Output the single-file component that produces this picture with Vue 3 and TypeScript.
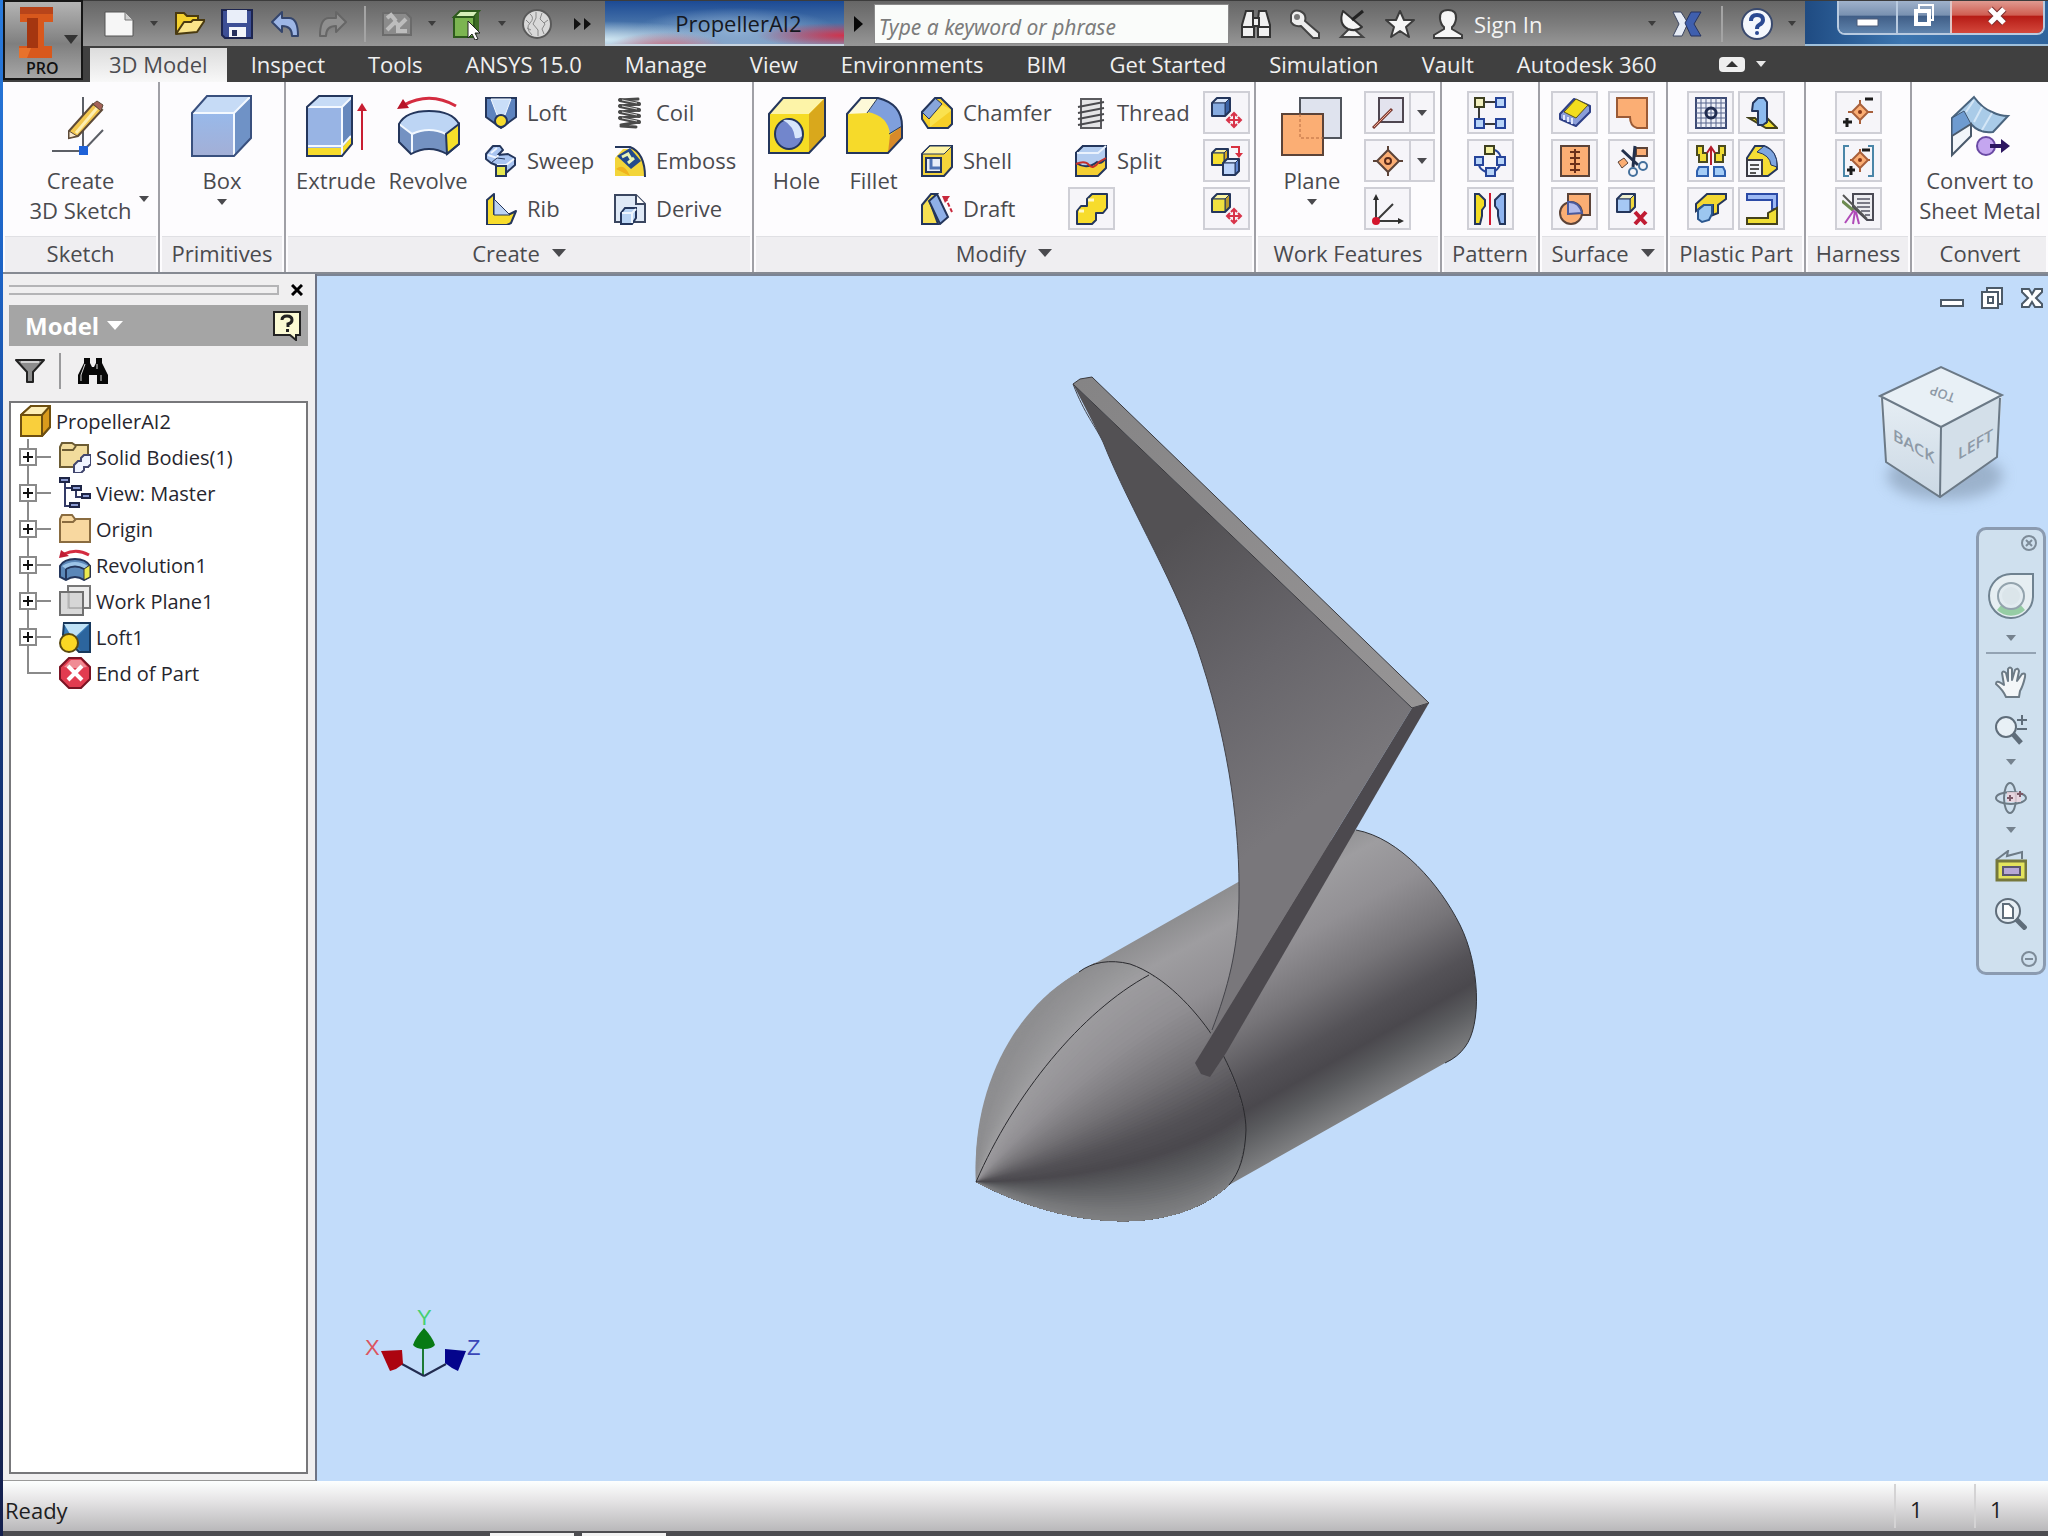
<script setup lang="ts">
interface Tool {
  icon: string
  label: string
  lines?: string[]
  caret?: 'below' | 'beside'
  boxed?: boolean
  split?: boolean
}

interface Panel {
  key: string
  title: string
  menu?: boolean
  big: Tool[]
  columns: Tool[][]
}

const t = (icon: string, label: string): Tool => ({ icon, label })
const b = (icon: string, label: string, split = false): Tool => ({ icon, label, boxed: true, split })

const tabs = ['3D Model', 'Inspect', 'Tools', 'ANSYS 15.0', 'Manage', 'View', 'Environments', 'BIM', 'Get Started', 'Simulation', 'Vault', 'Autodesk 360']

const panels: Panel[] = [
  { key: 'sketch', title: 'Sketch', big: [{ icon: 'sketch3d', label: 'Create 3D Sketch', lines: ['Create', '3D Sketch'], caret: 'beside' }], columns: [] },
  { key: 'primitives', title: 'Primitives', big: [{ icon: 'box', label: 'Box', lines: ['Box'], caret: 'below' }], columns: [] },
  {
    key: 'create', title: 'Create', menu: true,
    big: [{ icon: 'extrude', label: 'Extrude', lines: ['Extrude'] }, { icon: 'revolve', label: 'Revolve', lines: ['Revolve'] }],
    columns: [[t('loft', 'Loft'), t('sweep', 'Sweep'), t('rib', 'Rib')], [t('coil', 'Coil'), t('emboss', 'Emboss'), t('derive', 'Derive')]],
  },
  {
    key: 'modify', title: 'Modify', menu: true,
    big: [{ icon: 'hole', label: 'Hole', lines: ['Hole'] }, { icon: 'fillet', label: 'Fillet', lines: ['Fillet'] }],
    columns: [
      [t('chamfer', 'Chamfer'), t('shell', 'Shell'), t('draft', 'Draft')],
      [t('thread', 'Thread'), t('split', 'Split'), b('combine', 'Combine')],
      [b('moveFace', 'Move Face'), b('copyObject', 'Copy Object'), b('moveBodies', 'Move Bodies')],
    ],
  },
  {
    key: 'work', title: 'Work Features',
    big: [{ icon: 'plane', label: 'Plane', lines: ['Plane'], caret: 'below' }],
    columns: [[b('axis', 'Axis', true), b('point', 'Point', true), b('ucs', 'UCS')]],
  },
  { key: 'pattern', title: 'Pattern', big: [], columns: [[b('rectPattern', 'Rectangular'), b('circPattern', 'Circular'), b('mirror', 'Mirror')]] },
  {
    key: 'surface', title: 'Surface', menu: true, big: [],
    columns: [[b('thicken', 'Thicken'), b('stitch', 'Stitch'), b('sculpt', 'Sculpt')], [b('patch', 'Patch'), b('trim', 'Trim'), b('deleteFace', 'Delete Face')]],
  },
  {
    key: 'plastic', title: 'Plastic Part', big: [],
    columns: [[b('grill', 'Grill'), b('snapFit', 'Snap Fit'), b('lip', 'Lip')], [b('boss', 'Boss'), b('ruleFillet', 'Rule Fillet'), b('rest', 'Rest')]],
  },
  { key: 'harness', title: 'Harness', big: [], columns: [[b('pin', 'Place Pin'), b('pinGroup', 'Place Pin Group'), b('harnessProps', 'Harness Properties')]] },
  { key: 'convert', title: 'Convert', big: [{ icon: 'sheetMetal', label: 'Convert to Sheet Metal', lines: ['Convert to', 'Sheet Metal'] }], columns: [] },
]

const nodes = [
  { icon: 'solidBodies', label: 'Solid Bodies(1)', leaf: false },
  { icon: 'viewRep', label: 'View: Master', leaf: false },
  { icon: 'folder', label: 'Origin', leaf: false },
  { icon: 'revolution', label: 'Revolution1', leaf: false },
  { icon: 'workPlane', label: 'Work Plane1', leaf: false },
  { icon: 'loftNode', label: 'Loft1', leaf: false },
  { icon: 'endOfPart', label: 'End of Part', leaf: true },
]

const N = '#24365c'
const Y = '#f7dc2c'
const B = '#a9c5f2'
const O = '#fbae74'
const OB = '#5c4338'
const cross = (x: number, y: number) =>
  `<path d="M${x - 6} ${y}H${x + 6}M${x} ${y - 6}V${y + 6}M${x - 3} ${y - 4}L${x} ${y - 7}L${x + 3} ${y - 4}M${x - 3} ${y + 4}L${x} ${y + 7}L${x + 3} ${y + 4}M${x - 4} ${y - 3}L${x - 7} ${y}L${x - 4} ${y + 3}M${x + 4} ${y - 3}L${x + 7} ${y}L${x + 4} ${y + 3}" fill="none" stroke="#d8344a" stroke-width="2"/>`
const cube = (x: number, y: number, s: number, front: string, top: string, side: string) => {
  const d = Math.round(s * 0.35)
  return `<g stroke="${N}" stroke-width="1" stroke-linejoin="round"><path d="M${x} ${y + d}L${x + d} ${y}H${x + s + d}L${x + s} ${y + d}Z" fill="${top}"/><path d="M${x + s} ${y + d}L${x + s + d} ${y}V${y + s}L${x + s} ${y + s + d}Z" fill="${side}"/><path d="M${x} ${y + d}H${x + s}V${y + s + d}H${x}Z" fill="${front}"/><path d="M${x} ${y + d}L${x + d} ${y}H${x + s + d}V${y + s}L${x + s} ${y + s + d}H${x}Z" fill="none" stroke-width="2"/></g>`
}

const icons: Record<string, string> = {
  // Quick access bar
  newDoc: '<path d="M2 4H22L30 12V28H2Z" fill="#f6f6f6" stroke="#555" stroke-width="1"/><path d="M22 4V12H30Z" fill="#d0d0d0" stroke="#777"/>',
  open: '<path d="M3 26V5H11L14 8H25V13" fill="#f5d22e" stroke="#4a3a10" stroke-width="2"/><path d="M3 26L11 14H18L20 12H32L24 24Z" fill="#fbe58a" stroke="#4a3a10" stroke-width="2" stroke-linejoin="round"/>',
  save: `<path d="M1 2H31V30H4L1 27Z" fill="#3d4f96" stroke="#1d2550" stroke-width="2"/><path d="M6 2H26V15H6Z" fill="#e9eef9"/><path d="M8 19H25V29H8Z" fill="#f3f5fb"/><path d="M11 22H16V28H11Z" fill="#26305e"/>`,
  undo: '<path d="M3 14L13 4V10H20Q29 10 29 28H23Q23 18 13 18V24Z" fill="#9db6e6" stroke="#34456c" stroke-width="2" stroke-linejoin="round"/>',
  redo: '<path d="M29 14L19 4V10H12Q3 10 3 28H9Q9 18 19 18V24Z" fill="#8f8f8f" stroke="#666" stroke-width="2" stroke-linejoin="round"/>',
  update: '<path d="M2 5H25L30 10V27H2Z" fill="#8b8b8b" stroke="#6b6b6b" stroke-width="2"/><path d="M6 10L10 7L15 13M26 23H17V15M6 22L14 14L18 18L25 11" stroke="#bdbdbd" stroke-width="4" fill="none"/>',
  select: '<path d="M3 9L9 3H28L23 9Z" fill="#d6efb8" stroke="#2d5a1c" stroke-width="2"/><path d="M23 9L28 3V24L23 29Z" fill="#3d6b26"/><path d="M3 9H23V29H3Z" fill="#7cb551" stroke="#2d5a1c" stroke-width="2"/><path d="M17 13V30L21 26L24 32L27 31L24 25H29Z" fill="#fff" stroke="#222" stroke-width="1"/>',
  appearance: '<circle cx="16" cy="16" r="14" fill="#d9d9d9" stroke="#5a5a5a" stroke-width="2"/><path d="M9 6Q14 10 9 15T11 27M15 4V10L12 16L17 22V28M21 5L19 11L24 16L21 21L23 26M5 12L9 16M27 12L23 15M6 20L10 22" fill="none" stroke="#888" stroke-width="1"/>',
  more: '<path d="M7 10L14 16L7 22ZM17 10L24 16L17 22Z" fill="#111"/>',
  binocLight: '<g fill="#f0f0f0" stroke="#333" stroke-width="2"><path d="M6 3H13V9L14 12V29H2V17Z"/><path d="M19 3H26L30 17V29H18V12Z"/><path d="M13 10H19V18H13Z"/></g><path d="M2 19H14M18 19H30" stroke="#333" stroke-width="2"/>',
  key: '<path d="M3 7Q5 1 12 3Q19 6 17 13L31 25V30H25L13 18Q6 19 3 14Z" fill="#efefef" stroke="#444" stroke-width="2"/><circle cx="9" cy="9" r="3" fill="#777"/>',
  dish: '<path d="M14 20L5 29H27L18 21Z" fill="#f2f2f2" stroke="#444" stroke-width="2"/><path d="M7 3Q2 16 12 21Q20 24 26 19Z" fill="#f6f6f6" stroke="#333" stroke-width="2" stroke-linejoin="round"/><path d="M16 12L27 3" stroke="#222" stroke-width="3"/>',
  star: '<path d="M16 3L20 12H30L22 19L25 29L16 23L7 29L10 19L2 12H12Z" fill="#f6f6f6" stroke="#3c3c3c" stroke-width="2" stroke-linejoin="round"/>',
  person: '<path d="M16 2Q25 2 24 11Q23 17 20 19V21L30 27V30H2V27L12 21V19Q9 17 8 11Q7 2 16 2Z" fill="#f6f6f6" stroke="#3c3c3c" stroke-width="2"/>',
  exchange: '<path d="M2 4H10L17 15L11 28H2L8 16Z" fill="#e6ecf6" stroke="#3a4460" stroke-width="1"/><path d="M30 4H20L14 15L20 28H30L23 16Z" fill="#3f5fae" stroke="#26335e" stroke-width="1"/>',
  help: '<circle cx="16" cy="16" r="15" fill="#f4f7fc" stroke="#3a4a6e" stroke-width="2"/><path d="M10 13Q10 7 16 7Q22 7 22 12Q22 15 18 17Q16 18 16 21" fill="none" stroke="#2b4a92" stroke-width="4"/><circle cx="16" cy="25" r="2" fill="#2b4a92"/>',

  // Large ribbon icons
  sketch3d: `<path d="M34 3V56M3 57H34L54 36" fill="none" stroke="#5c5f66" stroke-width="2"/><path d="M30 52H39V61H30Z" fill="#1f62d8"/><path d="M20 37L44 10L53 16L29 42L20 44Z" fill="#f3c74e" stroke="#5d4a38" stroke-width="2"/><path d="M27 39L48 14" stroke="#fdeeb0" stroke-width="3"/><path d="M44 10L48 7L54 11L52 17Z" fill="#a46258" stroke="#5d4a38"/><path d="M20 37L28 42L20 44Z" fill="#fbe9cc" stroke="#5d4a38"/>`,
  box: `<defs><linearGradient id="boxFace" x1="0" y1="0" x2="0" y2="1"><stop offset="0" stop-color="#94bdf2"/><stop offset="1" stop-color="#a3afd6"/></linearGradient></defs><path d="M2 19L17 2H61V44L44 62H2Z" fill="url(#boxFace)"/><path d="M2 19L17 2H61L44 19Z" fill="#c6dbf6"/><path d="M44 19L61 2V44L44 62Z" fill="#6f92c6"/><path d="M3 19H44V61M44 19L60 3" fill="none" stroke="#f4f9ff" stroke-width="2"/><path d="M2 19L17 2H61V44L44 62H2Z" fill="none" stroke="#39507e" stroke-width="2"/>`,
  extrude: `<path d="M3 13L15 2H48V50L38 62H3Z" fill="#98b4e4"/><path d="M3 13L15 2H48L38 13Z" fill="#c6dbf6"/><path d="M38 13L48 2V50L38 62Z" fill="#6688bd"/><path d="M3 54H38L48 42V50L38 62H3Z" fill="${Y}"/><path d="M4 52H38L47 42M4 13H38V61M38 13L48 3" fill="none" stroke="#f4f9ff" stroke-width="2"/><path d="M3 13L15 2H48V50L38 62H3Z" fill="none" stroke="${N}" stroke-width="2"/><path d="M58 56V14" stroke="#c81e32" stroke-width="2"/><path d="M53 17L58 9L63 17Z" fill="#c81e32"/>`,
  revolve: `<path d="M3 30Q10 17 33 17Q56 17 63 30V50L51 60Q33 50 15 60L3 48Z" fill="#7492c2"/><path d="M3 30Q10 17 33 17Q56 17 63 30L50 40Q33 32 16 40Z" fill="#bdd5f4"/><path d="M50 40L63 30V50L51 60Z" fill="#f6e02a"/><path d="M3 30L16 40V59M16 40Q33 32 50 40" fill="none" stroke="#f2f8ff" stroke-width="2"/><path d="M50 40L63 30V50L51 60Z" fill="none" stroke="${N}" stroke-width="2"/><path d="M3 30Q10 17 33 17Q56 17 63 30V50L51 60Q33 50 15 60L3 48Z" fill="none" stroke="${N}" stroke-width="2"/><path d="M8 11Q34 -3 60 12" fill="none" stroke="#d42c40" stroke-width="3"/><path d="M1 15L7 5L13 14Z" fill="#b81428"/>`,
  hole: `<path d="M4 20L18 4H60V42L44 59H4Z" fill="#f6dc24"/><path d="M4 20L18 4H60L44 20Z" fill="#fdf4a8"/><path d="M44 20L60 4V42L44 59Z" fill="#d9a81c"/><path d="M4 20L18 4H60V42L44 59H4Z" fill="none" stroke="${N}" stroke-width="2"/><ellipse cx="24" cy="40" rx="14" ry="15" fill="#7286cc" stroke="${N}" stroke-width="2"/><path d="M18 26Q36 24 37 42Q34 45 30 44Q29 32 18 26Z" fill="#d8e6fb"/>`,
  fillet: `<path d="M5 20L19 4H36Q60 10 60 32V44L46 59H5Z" fill="#f6da2a"/><path d="M5 20L19 4H36L26 19Z" fill="#fdf9d8"/><path d="M26 18L36 4Q60 10 60 32L48 40Q46 22 26 18Z" fill="#7f9fdc"/><path d="M48 41L60 32V44L46 59Z" fill="#d88a2a"/><path d="M25 19L35 5M47 40L60 32" stroke="${N}" stroke-width="1"/><path d="M5 20L19 4H36Q60 10 60 32V44L46 59H5Z" fill="none" stroke="${N}" stroke-width="2"/>`,
  plane: `<path d="M20 4H61V44H20Z" fill="#dfe3ee" stroke="#50545c" stroke-width="2"/><path d="M2 20H43V61H2Z" fill="${O}" stroke="${OB}" stroke-width="2"/><path d="M20 20V44H43" fill="none" stroke="#b86c40" stroke-width="1" stroke-dasharray="3 2"/>`,
  sheetMetal: `<path d="M4 24L26 3Q34 14 44 18Q52 22 60 22L45 38Q32 40 23 30L4 44Z" fill="#a9cbe8" stroke="#4a647e" stroke-width="2"/><path d="M4 24L16 17L23 30L4 42Z" fill="#6e9bd0" stroke="#3f5672"/><path d="M4 42L23 30V42L4 61Z" fill="#f2f6fa" stroke="#4a5a6c" stroke-width="2"/><path d="M26 6L18 18M34 13L26 28M44 19L34 36" stroke="#d4e6f6" stroke-width="2"/><circle cx="38" cy="52" r="9" fill="#c4a6f0" stroke="#6a4aa4" stroke-width="2"/><path d="M42 52H56" stroke="#2c1660" stroke-width="4"/><path d="M53 45L62 52L53 59Z" fill="#2c1660"/>`,

  // Small ribbon icons
  loft: `<path d="M1 1H31V20L16 31L1 20Z" fill="#5d83be" stroke="${N}" stroke-width="2"/><path d="M6 2H26L20 18H12Z" fill="#c9def8" stroke="#f2f8ff"/><circle cx="16" cy="24" r="6" fill="${Y}" stroke="${N}" stroke-width="2"/>`,
  sweep: `<path d="M1 9L8 1H15L18 5L13 10L23 9L30 13V20L21 28H11V20L6 18L1 14Z" fill="${B}" stroke="${N}" stroke-width="2" stroke-linejoin="round"/><path d="M3 10L12 13L13 10M12 20L21 20L29 14M6 8L12 3" stroke="#eef5ff" stroke-width="2" fill="none"/><path d="M6 18L12 13L20 14" stroke="${N}" stroke-width="1" fill="none"/><path d="M11 21H21V31H11Z" fill="#e6e84e" stroke="${N}" stroke-width="2"/>`,
  rib: `<path d="M2 7L9 1V21H25L31 18L26 30L22 32H2Z" fill="${Y}" stroke="${N}" stroke-width="2" stroke-linejoin="round"/><path d="M9 6L25 22H9Z" fill="#bcd3f4" stroke="${N}" stroke-width="1"/>`,
  coil: '<g fill="none" stroke="#4a4a4a" stroke-width="4" stroke-linecap="round"><path d="M6 3L25 7M6 9L25 13M6 15L25 19M6 21L25 25"/></g><g fill="none" stroke="#4a4a4a" stroke-width="3" stroke-linecap="round"><path d="M25 7L6 9M25 13L6 15M25 19L6 21M25 25L7 28M6 3L24 2M7 29L22 30"/></g><path d="M8 3L23 6M8 9L23 12M8 15L23 18M8 21L23 24" stroke="#d4d4d4" stroke-width="1"/>',
  emboss: `<path d="M1 13L9 4H20Q31 12 31 31H1Z" fill="#f3d53a"/><path d="M1 2H16Q31 8 31 32" fill="none" stroke="${N}" stroke-width="2"/><path d="M3 11L16 3L27 16L17 24Z" fill="#234a8c"/><path d="M8 12L14 9L17 14M14 18L20 13" stroke="#e8f4b8" stroke-width="3" fill="none"/><path d="M2 24Q10 17 16 31" fill="#f0b41e"/>`,
  derive: `<path d="M1 2H22L31 11V29H1Z" fill="#dfe9f6" stroke="#3a4660" stroke-width="2"/><path d="M22 2V11H31" fill="#fff" stroke="#3a4660" stroke-width="2"/><path d="M7 20L11 15H22V25L18 31H7Z" fill="#b9d4f4" stroke="${N}" stroke-width="2"/><path d="M8 20H18V30M18 20L22 16" stroke="#eef6ff" fill="none" stroke-width="2"/>`,
  chamfer: `<path d="M1 15L14 1H20L31 12V27L27 31H7L1 22Z" fill="#f6cf28"/><path d="M1 15L14 1L21 7L8 22Z" fill="#88a6da" stroke="${N}" stroke-width="1"/><path d="M21 8L31 13L9 30V22Z" fill="#fae24e"/><path d="M1 15L14 1H20L31 12V27L27 31H7L1 22Z" fill="none" stroke="${N}" stroke-width="2"/>`,
  shell: `<path d="M1 9L9 1H31V22L23 31H1Z" fill="#f3d33a" stroke="${N}" stroke-width="2"/><path d="M1 9L9 1H31L23 9Z" fill="#fdf3a4" stroke="${N}"/><path d="M5 13H20V27H5Z" fill="#e8eef8" stroke="${N}" stroke-width="2"/><path d="M10 14V23H19" fill="none" stroke="#4f74b4" stroke-width="3"/>`,
  draft: `<path d="M1 12L10 1H16L9 9L17 31H1Z" fill="#f6df52" stroke="${N}" stroke-width="2"/><path d="M8 8L16 1L27 24L19 31Z" fill="#8fb0e8" stroke="${N}" stroke-width="2"/><path d="M31 19L25 6" stroke="#c8283c" stroke-width="2" stroke-dasharray="4 2"/><path d="M21 3L29 3L24 10Z" fill="#c8283c"/>`,
  thread: '<path d="M6 2H26V31H6Z" fill="#e4e4e6" stroke="#5a5a5e" stroke-width="2"/><path d="M3 10L29 5M3 16L29 11M3 22L29 17M3 28L29 23" stroke="#4a4a4e" stroke-width="2"/>',
  split: `<path d="M1 8L8 1H31V23L23 31H1Z" fill="#f4cf34" stroke="${N}" stroke-width="2"/><path d="M1 8L8 1H31V13Q26 20 22 17Q12 25 1 18Z" fill="#b4cdf0" stroke="${N}" stroke-width="2"/><path d="M2 8H23L31 1" fill="none" stroke="#eaf2fd" stroke-width="2"/><path d="M1 19Q10 15 14 20T24 17L31 13" fill="none" stroke="#c4302c" stroke-width="2"/>`,
  combine: `<path d="M1 18L5 13H11V6L16 1H31V15L27 20H20V27L16 31H1Z" fill="${Y}" stroke="${N}" stroke-width="2" stroke-linejoin="round"/><path d="M3 18H8M12 7H18" stroke="#fff8c4" stroke-width="3"/>`,
  moveFace: cube(1, 1, 13, '#86abe0', '#dbe8fa', '#3a62a4') + cross(23, 23),
  copyObject: cube(1, 4, 12, '#f6df30', '#fbf09a', '#d8a820') + cube(12, 14, 12, '#bcd4fa', '#dceafd', '#5f86d0') + '<path d="M20 2H28V9" stroke="#d83040" stroke-width="2" fill="none"/><path d="M24 8L28 13L32 8Z" fill="#d83040"/>',
  moveBodies: cube(1, 1, 13, '#f0e040', '#fbf4a0', '#b8982a') + cross(23, 23),
  axis: '<path d="M7 1H31V25H7Z" fill="#e3e3ee" stroke="#4e4650" stroke-width="2"/><path d="M1 31L20 12" stroke="#7a3c34" stroke-width="3"/><path d="M2 30L19 13" stroke="#f4a890" stroke-width="1"/>',
  point: `<path d="M16 1V31M1 16H31" stroke="${OB}" stroke-width="2"/><path d="M16 5L27 16L16 27L5 16Z" fill="${O}" stroke="${OB}" stroke-width="2"/><circle cx="16" cy="16" r="3" fill="${O}" stroke="#5a2a1a" stroke-width="2"/>`,
  ucs: '<path d="M4 28V5M4 28H28M4 28L21 11" stroke="#3a3a3a" stroke-width="2" fill="none"/><path d="M1 7L4 1L7 7ZM26 25L32 28L26 31Z" fill="#2c2c2c"/><circle cx="4" cy="28" r="4" fill="#d4142c"/>',
  rectPattern: '<path d="M5 5H27M5 5V27H27" fill="none" stroke="#3a3a3a" stroke-width="2"/><path d="M1 1H10V10H1Z" fill="#f3f0c0" stroke="#3e4020" stroke-width="2"/><g fill="#b8d4f8" stroke="#26449a" stroke-width="2"><path d="M22 1H31V10H22Z"/><path d="M1 22H10V31H1Z"/><path d="M22 22H31V31H22Z"/></g>',
  circPattern: '<path d="M21 5Q27 8 27 15T20 27M12 27Q5 24 5 19" fill="none" stroke="#26449a" stroke-width="2"/><path d="M11 1H20V9H11Z" fill="#f3f0a0" stroke="#3e4020" stroke-width="2"/><g fill="#b8d4f8" stroke="#26449a" stroke-width="2"><path d="M1 12H9V20H1Z"/><path d="M23 12H31V20H23Z"/><path d="M12 23H21V31H12Z"/></g>',
  mirror: `<path d="M1 1H5L11 7V13L8 17V23L6 31H1Z" fill="#f2dc24" stroke="${N}" stroke-width="2"/><path d="M31 1H27L21 7V13L24 17V23L26 31H31Z" fill="#8fb4f0" stroke="${N}" stroke-width="2"/><path d="M16 0V32" stroke="#d01830" stroke-width="2"/>`,
  thicken: `<path d="M1 17L15 2L31 9V15L17 29L1 22Z" fill="#8b9ed8" stroke="#2e3f86" stroke-width="2" stroke-linejoin="round"/><path d="M5 15L17 2L29 8L17 21Z" fill="#f2dd1e" stroke="#5a5318" stroke-width="1"/><path d="M5 18V23M9 20V25M13 21V27" stroke="#e0e6fa" stroke-width="2"/>`,
  stitch: `<path d="M2 1H30V31H2Z" fill="${O}" stroke="${OB}" stroke-width="2"/><path d="M16 4V28M11 7H21M11 13H21M11 19H21M11 25H21" stroke="#6a2f1a" stroke-width="2"/>`,
  sculpt: `<path d="M9 1H31V22H9Z" fill="${O}" stroke="${OB}" stroke-width="2"/><circle cx="12" cy="20" r="11" fill="${O}" stroke="${OB}" stroke-width="2"/><path d="M9 21V9Q20 8 23 20Z" fill="#b4bcec" stroke="#4b5a9c" stroke-width="2"/>`,
  patch: `<path d="M1 1H31V31H21Q14 29 14 20H1Z" fill="${O}" stroke="#9a5a36" stroke-width="2"/>`,
  trim: `<path d="M20 3H31V11H20Z" fill="${O}" stroke="${OB}" stroke-width="2"/><path d="M2 17L8 13L12 18L6 23Z" fill="${O}" stroke="${OB}" stroke-width="1"/><path d="M6 5L22 20M19 1L17 22" stroke="#22304c" stroke-width="3"/><circle cx="17" cy="27" r="4" fill="none" stroke="#44709c" stroke-width="2"/><circle cx="27" cy="21" r="4" fill="none" stroke="#44709c" stroke-width="2"/>`,
  deleteFace: cube(1, 1, 13, '#a6c8f4', '#eef0d0', '#f0d83c') + '<path d="M19 19L30 31M30 19L19 31" stroke="#c01c34" stroke-width="4"/>',
  grill: '<path d="M1 1H31V31H1Z" fill="#eef0f8" stroke="#3c4a74" stroke-width="2"/><path d="M6 1V31M11 1V31M16 1V31M21 1V31M26 1V31M1 6H31M1 11H31M1 16H31M1 21H31M1 26H31" stroke="#56648c" stroke-width="1"/><circle cx="16" cy="16" r="5" fill="none" stroke="#202c50" stroke-width="3"/>',
  snapFit: `<g stroke="#4a4a20" stroke-width="2" fill="#f0dc34"><path d="M2 1H8V8H12V17H4V10H2Z"/><path d="M30 1H24V8H20V17H28V10H30Z"/></g><path d="M16 20V3M12 8L16 2L20 8" stroke="#b41c2c" stroke-width="2" fill="none"/><g fill="#a4ccf6" stroke="#2e5fae" stroke-width="2"><path d="M4 22H13V31H2V26Z"/><path d="M28 22H19V31H30V26Z"/></g>`,
  lip: `<path d="M1 11L12 1H31V6L23 12V20L18 22V12H9L1 18Z" fill="#f3d832" stroke="${N}" stroke-width="2"/><path d="M3 17L9 12H17V21L14 27L7 29L3 26Z" fill="#9cc6f0" stroke="#2a568e" stroke-width="2"/>`,
  boss: `<path d="M3 21H9L14 26H20L22 22L31 31H20Z" fill="#f0de30" stroke="#44421c" stroke-width="2"/><path d="M7 6L12 1H18L21 5V25L17 28H12V14H6Z" fill="#8dbbee" stroke="${N}" stroke-width="2" stroke-linejoin="round"/>`,
  ruleFillet: `<path d="M1 13L9 1H18Q31 6 31 24L22 31H1Z" fill="#f4dc34" stroke="${N}" stroke-width="2"/><path d="M11 7L18 1Q32 6 31 22L25 20Q24 10 11 7Z" fill="#7fa6e0" stroke="${N}"/><path d="M1 15H16V31H1Z" fill="#f4f6fa" stroke="#3a3a44" stroke-width="2"/><path d="M4 20H13M4 24H13M4 28H10" stroke="#555" stroke-width="2"/>`,
  rest: `<path d="M1 1H31V16H26V7H1Z" fill="#9db9f4" stroke="#2b4aa6" stroke-width="2"/><path d="M1 25H22V20L31 15V31H1Z" fill="#f0de34" stroke="#44421c" stroke-width="2"/>`,
  pin: `<path d="M18 3V27M6 15H31" stroke="#a8603c" stroke-width="2"/><path d="M18 7L26 15L18 23L10 15Z" fill="${O}" stroke="#a8603c" stroke-width="2"/><circle cx="18" cy="15" r="2" fill="#8a3818"/><path d="M23 2H31M1 25H10M5 21V30" stroke="#1c1c1c" stroke-width="3"/>`,
  pinGroup: `<path d="M7 1H2V31H7M26 1H31V31H26" fill="none" stroke="#4a86a8" stroke-width="2"/><path d="M18 4V27M8 15H28" stroke="#a8603c" stroke-width="2"/><path d="M18 7L26 15L18 23L10 15Z" fill="${O}" stroke="#a8603c" stroke-width="2"/><circle cx="18" cy="15" r="2" fill="#8a3818"/><path d="M20 5H28M5 25H13M9 21V30" stroke="#1c1c1c" stroke-width="3"/>`,
  harnessProps: '<path d="M11 1H31V27H25L11 14Z" fill="#ececf0" stroke="#4a4a54" stroke-width="2"/><path d="M15 6H28M15 10H28M15 14H28M19 18H28M23 22H28" stroke="#7a7a86" stroke-width="2"/><path d="M1 2L25 26" stroke="#555" stroke-width="2"/><path d="M0 8L12 18" stroke="#6d8a50" stroke-width="3"/><path d="M12 17L3 30M13 18L11 31M14 19L17 31" stroke="#b04ab8" stroke-width="2"/>',

  // Browser tree
  part: '<path d="M2 10L12 1H31V22L23 31H2Z" fill="#f9cf3c" stroke="#5c430c" stroke-width="2"/><path d="M2 10L12 1H31L23 10Z" fill="#fdeeb6"/><path d="M23 10L31 1V22L23 31Z" fill="#d99a1c"/><path d="M2 10L12 1H31V22L23 31H2ZM2 10H23V31M23 10L31 1" fill="none" stroke="#6e4f10" stroke-width="2"/>',
  folder: '<path d="M1 6L3 2H13L16 6H31V29H1Z" fill="#f8d8a0" stroke="#8a6c40" stroke-width="2"/><path d="M3 9H14L17 6" fill="none" stroke="#8a6c40" stroke-width="2"/>',
  solidBodies: '<path d="M1 6L3 2H13L16 4H29V26H1Z" fill="#f2dc9c" stroke="#6c5c34" stroke-width="2"/><path d="M3 9H14L17 5" fill="none" stroke="#6c5c34" stroke-width="2"/><path d="M15 24L19 20H22V17L25 14H32V23L29 26H25V29L22 32H15Z" fill="#f0f4ff" stroke="#41466e" stroke-width="2"/>',
  viewRep: '<path d="M6 5V29H11M6 11H12M17 14V20H23" fill="none" stroke="#333a66" stroke-width="2"/><g fill="#8a9ad0" stroke="#1e2546" stroke-width="2"><path d="M1 1H10V5H1Z"/><path d="M13 9H22V13H13Z"/><path d="M23 17H31V21H23Z"/><path d="M11 26H20V30H11Z"/></g>',
  revolution: `<path d="M1 17Q5 10 16 10T31 17V28L25 31Q16 25 7 31L1 28Z" fill="#5b87b8" stroke="${N}" stroke-width="2"/><path d="M3 17Q16 9 29 17L25 20Q16 15 7 20Z" fill="#9cc4e8"/><path d="M25 20L31 16V28L25 31Z" fill="#ecea50" stroke="#333"/><path d="M7 20Q16 15 25 20M7 20V30" fill="none" stroke="${N}" stroke-width="2"/><path d="M5 5Q18 -1 30 6" stroke="#d42c40" stroke-width="3" fill="none"/><path d="M0 9L2 1L10 7Z" fill="#c01c34"/>`,
  workPlane: '<path d="M9 1H31V23H9Z" fill="#ececec" stroke="#777" stroke-width="2"/><path d="M1 7H24V30H1Z" fill="#d2d2d2" fill-opacity=".85" stroke="#707070" stroke-width="2"/><path d="M10 8V23H23" fill="none" stroke="#a0a0a0"/>',
  loftNode: '<path d="M5 2H31V31H20L4 14Z" fill="#3a7cb8" stroke="#17385c" stroke-width="2"/><path d="M5 3H30L14 18Z" fill="#bfe2f6"/><path d="M30 4L14 20L22 30H30Z" fill="#2c659e"/><circle cx="10" cy="22" r="9" fill="#fbd824" stroke="#5a4a10" stroke-width="2"/>',
  endOfPart: '<path d="M10 1H22L31 10V22L22 31H10L1 22V10Z" fill="#e23c50" stroke="#7a1424" stroke-width="2"/><path d="M5 10L12 3H22L28 10Q16 12 5 10Z" fill="#f08c94"/><path d="M9 9L23 23M23 9L9 23" stroke="#fff" stroke-width="4"/>',
  filter: '<path d="M1 5H29L18 17V27H12V17Z" fill="#8c8c8c" stroke="#222" stroke-width="2" stroke-linejoin="round"/><path d="M6 7H24" stroke="#d0d0d0" stroke-width="2"/>',
  binocDark: '<path d="M7 3H13V8L15 12H17L19 8V3H25V8L31 20V29H20V20H12V29H1V20L7 8Z" fill="#080808"/><path d="M8 9L4 20V26M20 9V14M24 20V26" stroke="#ddd" stroke-width="1" fill="none"/>',

  // Navigation bar
  wheel: '<path d="M24 2H46V25A22 22 0 1 1 24 2Z" fill="#e6eef2" stroke="#6f8290" stroke-width="2"/><path d="M10 38A20 20 0 0 0 38 38L32 31H16Z" fill="#96cda4"/><circle cx="24" cy="24" r="13" fill="#e2ebf0" stroke="#93a3ad" stroke-width="2"/><circle cx="24" cy="24" r="9" fill="#dbe5ea"/>',
  pan: '<path d="M11 31Q8 24 1 18Q1 14 6 17L9 19L7 7Q8 4 11 7L13 15V3Q15 0 17 3V14L20 4Q23 1 24 5L22 15L27 8Q31 6 30 11Q28 20 25 25L24 31Z" fill="#f3f6f8" stroke="#6d7b86" stroke-width="2" stroke-linejoin="round"/>',
  zoom: '<circle cx="11" cy="13" r="10" fill="#e8f0f6" stroke="#5f6d7a" stroke-width="2"/><path d="M18 20L26 29" stroke="#5f6d7a" stroke-width="5"/><path d="M22 6H32M27 1V11M22 15H32" stroke="#5f6d7a" stroke-width="2"/>',
  orbit: '<ellipse cx="16" cy="16" rx="15" ry="6" fill="none" stroke="#6d7b86" stroke-width="2"/><ellipse cx="15" cy="16" rx="6" ry="15" fill="none" stroke="#6d7b86" stroke-width="2"/><path d="M12 10H26V20H12Z" fill="#ecd3dc" fill-opacity=".8"/><path d="M12 16H18M15 13V19M22 12H28M25 9V15" stroke="#7c5a68" stroke-width="2"/>',
  lookAt: '<path d="M1 10L13 1L12 6L27 2V9" fill="none" stroke="#6d7b86" stroke-width="2"/><path d="M2 11H31V30H2Z" fill="#e3e35c" stroke="#76783c" stroke-width="3"/><path d="M8 17H25V25H8Z" fill="#b7a8d6" stroke="#5b5770" stroke-width="2"/>',
  zoomPage: '<circle cx="13" cy="13" r="12" fill="#e6eef4" stroke="#5f6d7a" stroke-width="2"/><path d="M21 21L31 31" stroke="#5f6d7a" stroke-width="5"/><path d="M8 6H14L18 10V20H8Z" fill="#fff" stroke="#5f6d7a" stroke-width="2"/>',
}

// Shading across the hub, from its upper silhouette (0) to its lower one (1).
const shade: [number, number[]][] = [
  [0, [142, 142, 144]],
  [0.12, [158, 157, 160]],
  [0.3, [146, 144, 148]],
  [0.5, [118, 116, 120]],
  [0.68, [84, 82, 87]],
  [0.78, [74, 72, 77]],
  [0.86, [90, 91, 94]],
  [1, [128, 129, 131]],
]
const rgb = (c: number[]) => `rgb(${c.map(Math.round).join(',')})`
function shadeAt(d: number): string {
  for (let i = 1; i < shade.length; i++) {
    const [d1, c1] = shade[i]
    const [d0, c0] = shade[i - 1]
    if (d <= d1) return rgb(c0.map((v, k) => v + ((c1[k] - v) * (d - d0)) / (d1 - d0)))
  }
  return rgb(shade[shade.length - 1][1])
}

// Nose cone: meridians run from the apex to the rim where the cone meets the hub.
type Pt = [number, number]
const apex: Pt = [976, 1182]
const centre: Pt = [1154, 1078]
const rim: Pt[] = [[1079, 972], [1095, 963], [1118, 962], [1140, 968], [1162, 983], [1192, 1010], [1212, 1035], [1225, 1060], [1236, 1087], [1244, 1113], [1246, 1130], [1244, 1146], [1238, 1170], [1229, 1185]]
const depth = (p: Pt) => Math.max(0, ((p[0] - 1101) * 0.492 + (p[1] - 960) * 0.871) / 259)
function meridian(e: Pt): string {
  const d = depth(e)
  const ctl = (a: number, r: number) =>
    [0, 1].map((k) => (apex[k] + a * (centre[k] - apex[k]) + r * (e[k] - centre[k])).toFixed(1)).join(' ')
  return `M${apex.join(' ')}C${ctl(0.23, 0.61 + 0.05 * d)} ${ctl(0.62, 1.01 + 0.12 * d)} ${e.join(' ')}`
}
const slices: { d: string; fill: string }[] = []
for (let i = 0; i < rim.length - 1; i++) {
  for (let s = 0; s < 8; s++) {
    const f = s / 8
    const e: Pt = [rim[i][0] + (rim[i + 1][0] - rim[i][0]) * f, rim[i][1] + (rim[i + 1][1] - rim[i][1]) * f]
    const rest = rim.slice(i + 1).map((p) => 'L' + p.join(' ')).join('')
    slices.push({ d: `${meridian(e)}${rest}C1171 1238 1066 1229 976 1182Z`, fill: shadeAt(depth(e)) })
  }
}
const seam = meridian([1149, 975])
const rimPath = 'M1079 972C1092 962 1110 959 1130 964C1165 976 1195 1010 1212 1035C1228 1062 1246 1100 1246 1130C1245 1155 1240 1172 1229 1185'
</script>

<template>
  <div class="app">
    <header class="head">
      <button class="logo" aria-label="Application menu">
        <svg viewBox="0 0 80 80" width="80" height="80">
          <path d="M17 7H50V22H41V46H49V58H16V46H24V22H17Z" fill="#d8581c" />
          <path d="M17 7H50V14H17Z" fill="#b8441a" />
          <path d="M24 18H35V48H24Z" fill="#a43610" />
          <path d="M16 48H28L24 58H16Z" fill="#e8722c" />
          <path d="M61 35H75L68 44Z" fill="#333" />
        </svg>
        <span class="pro">PRO</span>
      </button>
      <div class="titlebar">
        <div class="quick">
          <button class="cell" aria-label="New"><svg viewBox="0 0 32 32" v-html="icons.newDoc" /></button>
          <button class="drop" aria-label="New options"></button>
          <button class="cell" aria-label="Open"><svg viewBox="0 0 32 32" v-html="icons.open" /></button>
          <button class="cell" aria-label="Save"><svg viewBox="0 0 32 32" v-html="icons.save" /></button>
          <button class="cell" aria-label="Undo"><svg viewBox="0 0 32 32" v-html="icons.undo" /></button>
          <button class="cell" aria-label="Redo"><svg viewBox="0 0 32 32" v-html="icons.redo" /></button>
          <i class="sep"></i>
          <button class="cell" aria-label="Update"><svg viewBox="0 0 32 32" v-html="icons.update" /></button>
          <button class="drop" aria-label="Update options"></button>
          <button class="cell" aria-label="Select"><svg viewBox="0 0 32 32" v-html="icons.select" /></button>
          <button class="drop" aria-label="Select options"></button>
          <button class="cell" aria-label="Appearance"><svg viewBox="0 0 32 32" v-html="icons.appearance" /></button>
          <button class="cell more" aria-label="More commands"><svg viewBox="0 0 32 32" v-html="icons.more" /></button>
        </div>
        <div class="doc-title">PropellerAI2</div>
        <button class="expand" aria-label="Expand search"></button>
        <input class="search" type="text" aria-label="Search" placeholder="Type a keyword or phrase" />
        <div class="info">
          <button class="cell" aria-label="Search help"><svg viewBox="0 0 32 32" v-html="icons.binocLight" /></button>
          <button class="cell" aria-label="Subscription"><svg viewBox="0 0 32 32" v-html="icons.key" /></button>
          <button class="cell" aria-label="Communication"><svg viewBox="0 0 32 32" v-html="icons.dish" /></button>
          <button class="cell" aria-label="Favorites"><svg viewBox="0 0 32 32" v-html="icons.star" /></button>
          <button class="signin"><svg viewBox="0 0 32 32" v-html="icons.person" /><span>Sign In</span></button>
          <button class="drop push" aria-label="Account options"></button>
          <button class="cell" aria-label="Exchange"><svg viewBox="0 0 32 32" v-html="icons.exchange" /></button>
          <i class="sep wide"></i>
          <button class="cell" aria-label="Help"><svg viewBox="0 0 32 32" v-html="icons.help" /></button>
          <button class="drop" aria-label="Help options"></button>
        </div>
        <div class="frame">
          <div class="winbtns">
            <button class="min" aria-label="Minimize"><svg viewBox="0 0 32 32"><path d="M5 18H26V25H5Z" fill="#fff" stroke="#4a5a78" stroke-width="1" /></svg></button>
            <button class="max" aria-label="Restore"><svg viewBox="0 0 32 32"><path d="M11 8V4H25V19H22" fill="none" stroke="#fff" stroke-width="2" /><path d="M8 10H21V23H8Z" fill="none" stroke="#fff" stroke-width="4" /></svg></button>
            <button class="close" aria-label="Close"><svg viewBox="0 0 32 32"><path d="M9 8L23 22M23 8L9 22" stroke="#7c3030" stroke-width="7" /><path d="M9 8L23 22M23 8L9 22" stroke="#fff" stroke-width="5" /></svg></button>
          </div>
        </div>
      </div>
      <nav class="tabs">
        <a v-for="(tab, i) in tabs" :key="tab" href="#" class="tab" :class="{ active: i === 0 }">{{ tab }}</a>
        <button class="collapse" aria-label="Minimize ribbon"></button>
        <button class="collapse-drop" aria-label="Ribbon options"></button>
      </nav>
    </header>

    <section class="ribbon">
      <div v-for="p in panels" :key="p.key" class="panel" :class="p.key">
        <div class="tools">
          <button v-for="tool in p.big" :key="tool.label" class="big">
            <svg viewBox="0 0 64 64" v-html="icons[tool.icon]" />
            <span v-for="line in tool.lines" :key="line">{{ line }}</span>
            <i v-if="tool.caret" class="caret" :class="tool.caret"></i>
          </button>
          <div v-for="(col, c) in p.columns" :key="c" class="col">
            <div v-for="tool in col" :key="tool.label" class="slot">
              <button class="small" :class="{ boxed: tool.boxed }" :aria-label="tool.label">
                <svg viewBox="0 0 32 32" v-html="icons[tool.icon]" />
                <span v-if="!tool.boxed">{{ tool.label }}</span>
              </button>
              <button v-if="tool.split" class="split" :aria-label="tool.label + ' options'"><i class="caret"></i></button>
            </div>
          </div>
        </div>
        <div class="caption">{{ p.title }}<i v-if="p.menu" class="tri"></i></div>
      </div>
    </section>

    <main class="main">
      <aside class="side">
        <div class="grip"><i></i><button aria-label="Close browser"><svg viewBox="0 0 12 12" width="12" height="12"><path d="M1 1L11 11M11 1L1 11" stroke="#000" stroke-width="3" /></svg></button></div>
        <div class="side-head">
          <button class="model">Model<i></i></button>
          <button class="tip" aria-label="Help">
            <svg viewBox="0 0 28 30" width="28" height="30"><path d="M1 1H27V24H23V29L17 24H1Z" fill="#fbfad4" stroke="#222" stroke-width="2" /><path d="M9 9Q9 5 14 5T19 9Q19 12 15 13V16" fill="none" stroke="#222" stroke-width="3" /><path d="M13 18H16V21H13Z" fill="#222" /></svg>
          </button>
        </div>
        <div class="side-tools">
          <button aria-label="Filter"><svg viewBox="0 0 32 32" v-html="icons.filter" /></button>
          <i></i>
          <button aria-label="Find"><svg viewBox="0 0 32 32" v-html="icons.binocDark" /></button>
        </div>
        <ul class="tree">
          <li class="root"><svg class="ico" viewBox="0 0 32 32" v-html="icons.part" />PropellerAI2</li>
          <li v-for="node in nodes" :key="node.label">
            <svg class="branch" viewBox="0 0 40 36">
              <path :d="node.leaf ? 'M9 0V18H32' : 'M9 0V36M9 18H32'" fill="none" stroke="#8a8a8a" stroke-width="2" />
              <template v-if="!node.leaf">
                <path d="M1 10H17V26H1Z" fill="#fff" stroke="#8a8a8a" stroke-width="2" />
                <path d="M4 18H14M9 13V23" stroke="#111" stroke-width="2" />
              </template>
            </svg>
            <svg class="ico" viewBox="0 0 32 32" v-html="icons[node.icon]" />{{ node.label }}
          </li>
        </ul>
      </aside>

      <section class="view">
        <svg class="scene" viewBox="317 276 1731 1205" preserveAspectRatio="xMidYMid meet">
          <defs>
            <linearGradient id="hub" gradientUnits="userSpaceOnUse" x1="1101" y1="960" x2="1228" y2="1186">
              <stop v-for="s in shade" :key="s[0]" :offset="s[0]" :stop-color="rgb(s[1])" />
            </linearGradient>
            <linearGradient id="blade" gradientUnits="userSpaceOnUse" x1="1140" y1="560" x2="1320" y2="800">
              <stop offset="0" stop-color="#535154" /><stop offset=".5" stop-color="#67656a" /><stop offset="1" stop-color="#79777b" />
            </linearGradient>
            <linearGradient id="edge" gradientUnits="userSpaceOnUse" x1="1080" y1="380" x2="1420" y2="705">
              <stop offset="0" stop-color="#858485" /><stop offset="1" stop-color="#969495" />
            </linearGradient>
            <linearGradient id="cubeFace" x1="0" y1="0" x2="0" y2="1">
              <stop offset="0" stop-color="#e6eef4" /><stop offset="1" stop-color="#cbd8e4" />
            </linearGradient>
            <filter id="soft" x="-30%" y="-60%" width="160%" height="220%"><feGaussianBlur stdDeviation="7" /></filter>
          </defs>

          <path d="M1079 972L1101 960L1240 881L1356 830C1400 838 1440 885 1460 925C1480 965 1482 1025 1465 1047Q1458 1057 1445 1063L1229 1185L1150 1150Z" fill="url(#hub)" />
          <path d="M1356 830C1400 838 1440 885 1460 925C1480 965 1482 1025 1465 1047Q1458 1057 1445 1063" fill="none" stroke="#2f3136" stroke-width="1" />
          <path v-for="(s, i) in slices" :key="i" :d="s.d" :fill="s.fill" />
          <path :d="rimPath" fill="none" stroke="#2a2a2e" stroke-width="1" />
          <path :d="seam" fill="none" stroke="#2a2a2e" stroke-width="1" />

          <path d="M1073 384L1412 708L1204 1048L1212 1030C1228 988 1238 950 1239 900C1240 830 1230 750 1202 663C1180 590 1130 510 1103 442Z" fill="url(#blade)" />
          <path d="M1073 384L1080 379L1092 377L1429 703L1412 708Z" fill="url(#edge)" stroke="#3a3a3e" stroke-width="1" />
          <path d="M1412 708L1429 703L1226 1053L1210 1077L1201 1074L1195 1063Z" fill="#4c494e" />
          <path d="M1073 384C1085 415 1095 425 1103 442C1130 510 1180 590 1202 663C1230 750 1240 830 1239 900C1238 950 1228 988 1212 1030" fill="none" stroke="#44444a" stroke-width="1" />

          <g class="cube">
            <ellipse cx="1945" cy="476" rx="58" ry="24" fill="#8296ad" opacity=".6" filter="url(#soft)" />
            <path d="M1880 396L1941 427L1940 497L1886 462Z" fill="url(#cubeFace)" />
            <path d="M1941 427L2002 395L1997 457L1940 497Z" fill="#d3dfe9" />
            <path d="M1880 396L1941 367L2002 395L1941 427Z" fill="#e8f0f6" />
            <path d="M1880 396L1941 367L2002 395L1941 427ZM1882 398L1886 462L1940 497L1997 457L2000 398M1941 427L1940 497" fill="none" stroke="#6b7986" stroke-width="2" />
            <text transform="translate(1893 440) skewY(30)">BACK</text>
            <text transform="translate(1958 460) skewY(-30)">LEFT</text>
            <text class="top" transform="translate(1956 394) rotate(200)">TOP</text>
          </g>

          <g>
            <path d="M423 1376V1346" stroke="#1c7a34" stroke-width="2" />
            <path d="M424 1376L402 1364M424 1376L446 1364" stroke="#222c50" stroke-width="2" />
            <path d="M424 1328Q433 1338 435 1345Q432 1349 424 1349T413 1345Q415 1338 424 1328Z" fill="#087a14" />
            <path d="M381 1351L402 1350L403 1364L396 1369L390 1371Z" fill="#ac0410" />
            <path d="M466 1351L445 1349V1363L452 1368L458 1371Z" fill="#04048c" />
            <text class="ax x" x="365" y="1355">X</text>
            <text class="ax y" x="417" y="1325">Y</text>
            <text class="ax z" x="467" y="1355">Z</text>
          </g>
        </svg>

        <div class="view-btns">
          <button aria-label="Minimize view"><svg viewBox="0 0 24 24"><path d="M1 14H23V20H1Z" fill="#fff" stroke="#4c5a68" stroke-width="2" /></svg></button>
          <button aria-label="Restore view"><svg viewBox="0 0 24 24"><path d="M7 5V2H22V18H18" fill="#fff" stroke="#4c5a68" stroke-width="2" /><path d="M2 6H18V22H2Z" fill="#fff" stroke="#4c5a68" stroke-width="2" /><path d="M8 11H13V17H8Z" fill="none" stroke="#4c5a68" stroke-width="2" /></svg></button>
          <button aria-label="Close view"><svg viewBox="0 0 24 24"><path d="M2 3H9L12 8L15 3H22V6L16 12L22 18V21H15L12 16L9 21H2V18L8 12L2 6Z" fill="#fff" stroke="#4c5a68" stroke-width="2" /></svg></button>
        </div>

        <div class="navbar">
          <button class="mini" aria-label="Close navigation bar"><svg viewBox="0 0 18 18"><circle cx="9" cy="9" r="7" fill="none" stroke="#7d8b98" stroke-width="2" /><path d="M6 6L12 12M12 6L6 12" stroke="#7d8b98" stroke-width="2" /></svg></button>
          <button class="wheel" aria-label="Steering wheel"><svg viewBox="0 0 48 48" v-html="icons.wheel" /></button>
          <i class="caret"></i>
          <hr />
          <button class="nav-i" aria-label="Pan"><svg viewBox="0 0 32 32" v-html="icons.pan" /></button>
          <button class="nav-i" aria-label="Zoom"><svg viewBox="0 0 32 32" v-html="icons.zoom" /></button>
          <i class="caret"></i>
          <button class="nav-i" aria-label="Orbit"><svg viewBox="0 0 32 32" v-html="icons.orbit" /></button>
          <i class="caret"></i>
          <button class="nav-i" aria-label="Look at"><svg viewBox="0 0 32 32" v-html="icons.lookAt" /></button>
          <button class="nav-i" aria-label="Zoom all"><svg viewBox="0 0 32 32" v-html="icons.zoomPage" /></button>
          <button class="mini last" aria-label="Customize"><svg viewBox="0 0 18 18"><circle cx="9" cy="9" r="7" fill="none" stroke="#7d8b98" stroke-width="2" /><path d="M5 9H13" stroke="#7d8b98" stroke-width="2" /></svg></button>
        </div>
      </section>
    </main>

    <footer class="status">
      <span class="ready">Ready</span>
      <span class="count">1</span>
      <span class="count last">1</span>
    </footer>
    <div class="taskbar"><i></i><i></i></div>
  </div>
</template>

<style>
body {
  margin: 0;
}
</style>

<style scoped>
.app {
  box-sizing: border-box;
  min-height: 100vh;
  display: flex;
  flex-direction: column;
  padding-left: 3px;
  background: linear-gradient(#2a7bdc, #1c62c4 18%, #173a80 40%, #14204e);
  font-family: 'Open Sans', 'Noto Sans', sans-serif;
  font-size: 22px;
  color: #4a4a4e;
}
button {
  appearance: none;
  box-sizing: border-box;
  margin: 0;
  padding: 0;
  border: 0;
  background: none;
  font: inherit;
  color: inherit;
}
svg {
  display: block;
  flex: none;
}

/* Title bar and tabs */
.head {
  display: grid;
  grid-template-columns: 80px minmax(0, 1fr);
  grid-template-rows: 46px 36px;
  background: #404040;
}
.logo {
  grid-row: 1 / 3;
  position: relative;
  height: 80px;
  border: 2px solid #161616;
  background: linear-gradient(#b4b4b4, #7f7f7f 55%, #a6a6a6);
}
.logo svg {
  margin: -2px;
}
.pro {
  position: absolute;
  left: 21px;
  bottom: 0;
  font-size: 16px;
  line-height: 20px;
  font-weight: 600;
  color: #111;
}
.titlebar {
  display: flex;
  align-items: center;
  border-top: 1px solid #3c3c3c;
  box-sizing: border-box;
  background: linear-gradient(#666, #7c7c7c 50%, #979797);
}
.quick {
  display: flex;
  align-items: center;
  padding-left: 12px;
}
.cell {
  width: 48px;
  height: 40px;
  display: flex;
  align-items: center;
  justify-content: center;
}
.cell svg,
.signin svg,
.side-tools svg {
  width: 32px;
  height: 32px;
}
.cell.more {
  width: 44px;
}
.drop {
  width: 22px;
  height: 40px;
  display: flex;
  align-items: center;
  justify-content: center;
}
.drop::before {
  content: '';
  border: 4px solid transparent;
  border-top: 5px solid #3c3c3c;
  border-bottom: 0;
}
.sep {
  width: 16px;
  height: 36px;
  background: linear-gradient(#a4a4a4, #a4a4a4) center / 2px 100% no-repeat;
}
.sep.wide {
  width: 22px;
}
.doc-title {
  flex: 210 1 0;
  align-self: stretch;
  display: flex;
  align-items: center;
  justify-content: center;
  padding-left: 28px;
  box-sizing: border-box;
  color: #15181f;
  border-bottom: 2px solid #c8d4e0;
  background:
    radial-gradient(ellipse at 100% 80%, #d0334c 0, rgba(208, 51, 76, 0) 26%),
    radial-gradient(ellipse at 26% 110%, #c86a7c 0, rgba(200, 106, 124, 0) 24%),
    radial-gradient(ellipse at 0 90%, #cfe6f2 0, rgba(207, 230, 242, 0) 34%),
    radial-gradient(ellipse at 55% 70%, #8fb0d4 0, rgba(143, 176, 212, 0) 55%),
    linear-gradient(#1c4a94, #4c78ac 60%, #7d9cc0);
}
.expand {
  width: 30px;
  height: 40px;
  display: flex;
  align-items: center;
  justify-content: center;
}
.expand::before {
  content: '';
  border: 8px solid transparent;
  border-left: 9px solid #080808;
  border-right: 0;
}
.search {
  flex: 344 1 0;
  min-width: 0;
  box-sizing: border-box;
  height: 40px;
  padding: 6px 4px 0;
  border: 1px solid #8a8a8a;
  background: #fafcfa;
  font-family: 'Noto Sans', 'Open Sans', sans-serif;
  font-size: 21px;
  font-style: italic;
  color: #555;
}
.search::placeholder {
  color: #7c7c7c;
  font-style: italic;
  opacity: 1;
}
.info {
  flex: 569 1 0;
  display: flex;
  align-items: center;
  padding: 0 2px 0 3px;
}
.signin {
  display: flex;
  align-items: center;
  gap: 10px;
  padding-left: 8px;
  color: #f4f4f4;
  height: 40px;
}
.push {
  margin-left: auto;
}
.frame {
  align-self: stretch;
  width: 243px;
  box-sizing: border-box;
  padding: 0 3px 0 32px;
  border-bottom: 2px solid #9fc0dc;
  background: linear-gradient(90deg, #1f4b82, #3d76b0 40%, #2e639c);
}
.winbtns {
  display: flex;
  height: 34px;
  border: 2px solid #b9cbe0;
  border-top: 0;
  border-radius: 0 0 8px 8px;
  overflow: hidden;
  box-sizing: border-box;
}
.winbtns button {
  display: flex;
  align-items: center;
  justify-content: center;
  background: linear-gradient(#9fb2cb, #7890b0 45%, #3f5d86 46%, #5f83ac);
}
.winbtns svg {
  width: 32px;
  height: 32px;
}
.min {
  flex: 58;
  border-right: 2px solid #b9cbe0;
}
.max {
  flex: 52;
}
.winbtns .min {
  border-right: 2px solid #b9cbe0;
}
.winbtns .close {
  flex: 92;
  border-left: 2px solid #e0c4c4;
  background: linear-gradient(#e09a90, #cf5c50 45%, #b51a14 46%, #d4483c);
}
.tabs {
  display: flex;
  align-items: flex-end;
  gap: 1px;
  padding-left: 7px;
  background: #404040;
}
.tab {
  height: 34px;
  line-height: 32px;
  padding: 0 21px;
  color: #f0f0f0;
  text-decoration: none;
  white-space: nowrap;
}
.tab.active {
  padding: 0 19px;
  margin-right: 2px;
  background: linear-gradient(#dcdcdc, #f8f8f8);
  color: #4c4c50;
}
.collapse {
  align-self: center;
  width: 26px;
  height: 15px;
  margin-left: 40px;
  border-radius: 4px;
  background: #efefef;
  display: flex;
  align-items: center;
  justify-content: center;
}
.collapse::before {
  content: '';
  border: 6px solid transparent;
  border-bottom: 6px solid #333;
  border-top: 0;
}
.collapse-drop {
  align-self: center;
  margin-left: 10px;
  border: 5px solid transparent;
  border-top: 6px solid #e8e8e8;
  border-bottom: 0;
}

/* Ribbon */
.ribbon {
  display: flex;
  height: 190px;
  border-bottom: 2px solid #868a92;
  background: #fdfcfe;
}
.panel {
  flex: 1 1 0;
  min-width: 0;
  display: flex;
  flex-direction: column;
  box-sizing: border-box;
  border-right: 2px solid #a0a0a6;
}
.sketch { flex-grow: 155; }
.primitives { flex-grow: 124; }
.create { flex-grow: 466; }
.modify { flex-grow: 500; }
.work { flex-grow: 184; }
.pattern { flex-grow: 96; }
.surface { flex-grow: 126; }
.plastic { flex-grow: 136; }
.harness { flex-grow: 104; }
.convert { flex-grow: 136; border-right: 0; }
.tools {
  flex: 1;
  display: flex;
  justify-content: center;
}
.create .tools,
.modify .tools,
.work .tools {
  justify-content: flex-start;
  padding-left: 4px;
}
.big {
  position: relative;
  flex: none;
  width: 92px;
  display: flex;
  flex-direction: column;
  align-items: center;
  padding-top: 12px;
  white-space: nowrap;
}
.big svg {
  width: 64px;
  height: 64px;
  margin-bottom: 7px;
}
.big span {
  line-height: 30px;
}
.modify .big {
  width: 77px;
}
.work .big {
  width: 104px;
}
.sketch .big {
  width: 104px;
}
.caret {
  border: 5px solid transparent;
  border-top: 6px solid #4a4a4e;
  border-bottom: 0;
}
.caret.below {
  margin-top: 4px;
}
.caret.beside {
  position: absolute;
  right: -16px;
  top: 114px;
}
.col {
  flex: none;
  padding-top: 9px;
  display: flex;
  flex-direction: column;
  gap: 5px;
}
.create .col {
  width: 129px;
  margin-left: 4px;
}
.create .col + .col {
  margin-left: 0;
}
.modify .col {
  width: 154px;
  margin-left: 2px;
}
.modify .col + .col {
  width: 135px;
  margin-left: 0;
}
.modify .col:last-child {
  width: 47px;
}
.surface .tools {
  gap: 10px;
}
.plastic .tools {
  gap: 4px;
}
.slot {
  display: flex;
}
.small {
  height: 43px;
  display: flex;
  align-items: center;
  gap: 10px;
  padding: 0 6px;
  border: 1px solid transparent;
}
.small svg {
  width: 32px;
  height: 32px;
}
.small span {
  line-height: 28px;
  padding-bottom: 2px;
}
.small.boxed,
.split {
  border: 2px solid #cfcfd6;
  background: #f6f5f9;
}
.small.boxed {
  width: 47px;
  justify-content: center;
  padding: 0;
}
.split {
  width: 26px;
  height: 43px;
  margin-left: -2px;
  display: flex;
  align-items: center;
  justify-content: center;
}
.caption {
  height: 36px;
  display: flex;
  align-items: center;
  justify-content: center;
  gap: 12px;
  margin: 0 2px;
  padding-bottom: 4px;
  background: #efeef1;
  border-top: 1px solid #e0e0e4;
  box-sizing: border-box;
  white-space: nowrap;
}
.tri {
  border: 7px solid transparent;
  border-top: 8px solid #4a4a4e;
  border-bottom: 0;
}

/* Model browser */
.main {
  flex: 1;
  display: flex;
  min-height: 1000px;
}
.side {
  width: 314px;
  flex: none;
  box-sizing: border-box;
  display: flex;
  flex-direction: column;
  padding: 0 7px 6px 6px;
  border-right: 2px solid #6d7384;
  border-bottom: 1px solid #9a9a9a;
  background: #f0eff0;
}
.grip {
  height: 31px;
  display: flex;
  align-items: center;
  gap: 12px;
}
.grip i {
  flex: 1;
  height: 6px;
  border: 2px solid #b4b4b6;
  border-left: 0;
}
.grip button {
  margin-right: 5px;
}
.side-head {
  height: 41px;
  display: flex;
  align-items: center;
  justify-content: space-between;
  padding: 0 7px 0 16px;
  background: #a5a5a5;
}
.model {
  display: flex;
  align-items: center;
  gap: 8px;
  font-weight: 700;
  font-size: 24px;
  color: #fff;
}
.model i {
  border: 8px solid transparent;
  border-top: 9px solid #fff;
  border-bottom: 0;
}
.side-tools {
  height: 55px;
  box-sizing: border-box;
  display: flex;
  align-items: center;
  padding: 0 0 6px 6px;
}
.side-tools i {
  width: 2px;
  height: 36px;
  margin: 0 16px 0 12px;
  background: #9a9a9c;
}
.tree {
  flex: 1;
  margin: 0;
  padding: 0;
  list-style: none;
  border: 2px solid #77777a;
  background: #fff;
  font-size: 20px;
  color: #26262e;
}
.tree li {
  height: 36px;
  display: flex;
  align-items: center;
  padding-left: 8px;
  white-space: nowrap;
}
.branch {
  width: 40px;
  height: 36px;
}
.ico {
  width: 32px;
  height: 32px;
  margin-right: 5px;
}

/* Graphics window */
.view {
  flex: 1;
  min-width: 0;
  position: relative;
  background: #c2dcfa;
  border-top: 2px solid #7b8494;
  box-sizing: border-box;
}
.scene {
  position: absolute;
  inset: 0;
  width: 100%;
  height: 100%;
}
.cube text {
  font: 600 16px 'Open Sans', 'Noto Sans', sans-serif;
  fill: #8d99a6;
}
.cube .top {
  font-size: 13px;
}
.ax {
  font: 22px 'Liberation Sans', sans-serif;
}
.ax.x { fill: #dc5560; }
.ax.y { fill: #46d070; }
.ax.z { fill: #3a46b8; }
.view-btns {
  position: absolute;
  top: 10px;
  right: 4px;
  display: flex;
  gap: 16px;
}
.view-btns svg {
  width: 24px;
  height: 24px;
}
.navbar {
  position: absolute;
  top: 251px;
  right: 2px;
  width: 70px;
  height: 448px;
  box-sizing: border-box;
  border: 3px solid #8b9bb0;
  border-radius: 10px;
  background: #cfe0ee;
  display: flex;
  flex-direction: column;
  align-items: center;
  padding: 4px 0;
}
.mini {
  align-self: flex-end;
  margin-right: 5px;
}
.mini svg {
  width: 18px;
  height: 18px;
}
.mini.last {
  margin-top: auto;
}
.wheel {
  margin: 20px 0 10px;
}
.wheel svg {
  width: 48px;
  height: 48px;
}
.navbar .caret {
  margin: 5px 0 9px;
  border-top-color: #75828e;
}
.navbar hr {
  width: 50px;
  margin: 2px 0 4px;
  border: 0;
  border-top: 2px solid #93a3b3;
}
.nav-i {
  margin: 8px 0;
}
.nav-i svg {
  width: 32px;
  height: 32px;
}

/* Status bar */
.status {
  height: 50px;
  display: flex;
  align-items: center;
  background: linear-gradient(#fdffff, #e8e7e8 35%, #b9b8ba);
  color: #1e1e22;
}
.ready {
  flex: 1;
  padding: 8px 0 0 2px;
}
.count {
  width: 80px;
  height: 44px;
  line-height: 50px;
  box-sizing: border-box;
  padding-left: 14px;
  border-left: 2px solid #d4d3d4;
}
.count.last {
  width: 74px;
}
.taskbar {
  height: 5px;
  display: flex;
  gap: 8px;
  padding-left: 487px;
  background: #4c4c50;
}
.taskbar i {
  width: 84px;
  margin-top: 2px;
  background: #f2f2f2;
}
</style>
